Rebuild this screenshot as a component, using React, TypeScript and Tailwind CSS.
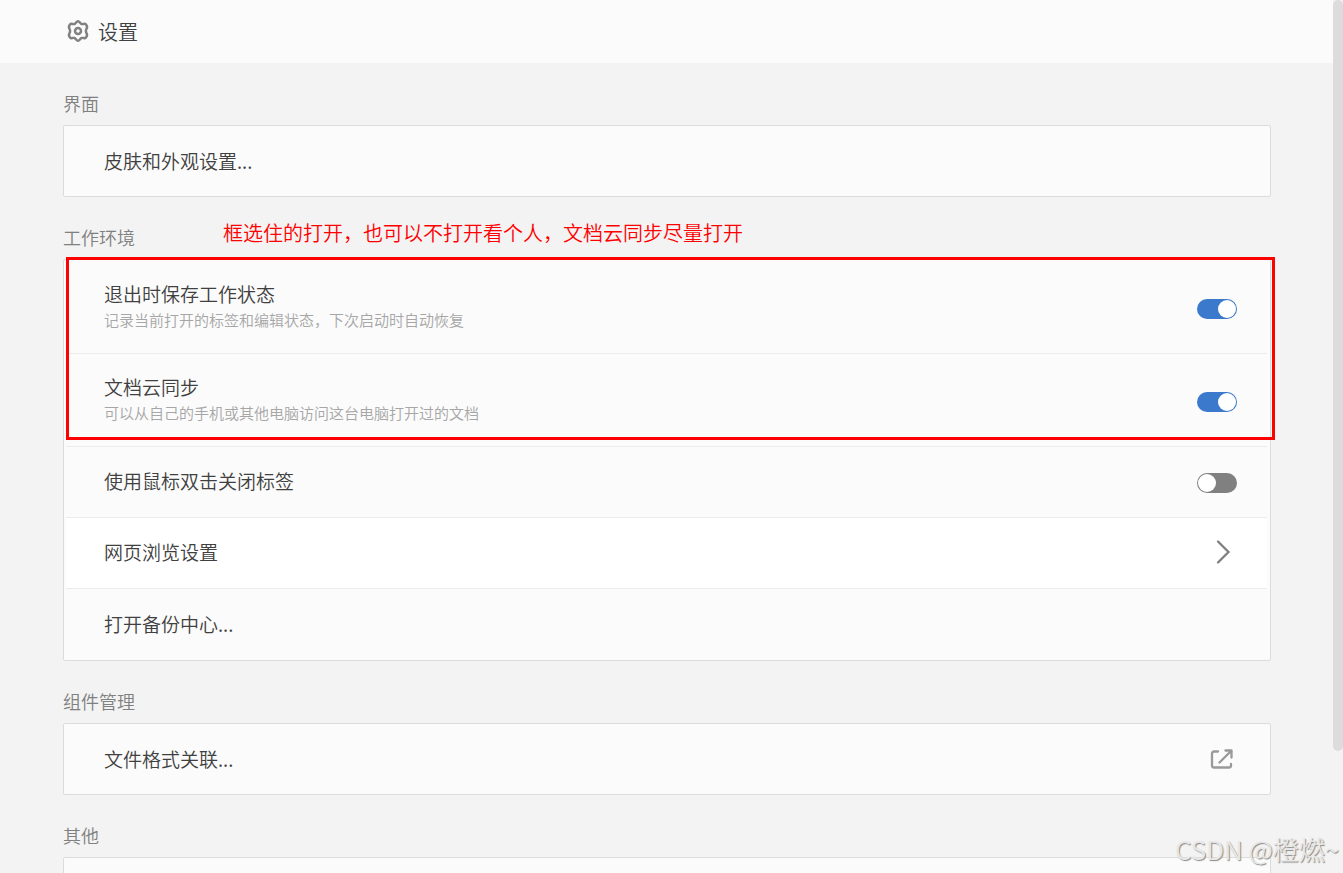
import { useState } from 'react';
import type { ReactNode } from 'react';

function Section({ title, children }: { title: string; children: ReactNode }) {
  return (
    <section>
      <h2 className="pt-[26px] pb-2 text-lg/7 text-[#808080]">{title}</h2>
      <div className="relative rounded-xs border border-[#dcdcdc] bg-[#fbfbfb] pt-px pr-[3px] pl-0.5">{children}</div>
    </section>
  );
}

function ToggleRow({ id, title, description, initial }: { id: string; title: string; description?: string; initial: boolean }) {
  const [on, setOn] = useState(initial);
  return (
    <div className={`flex items-center justify-between border-b border-[#ececec] pr-[30px] pl-[38px] ${description ? 'pt-5 pb-5' : 'h-[71px] pb-0.5'}`}>
      <div>
        <label htmlFor={id} className="block text-[19px]/[26px] text-[#404040]">{title}</label>
        {description && <p className="text-[15px]/[26px] text-[#a6a6a6]">{description}</p>}
      </div>
      <input
        id={id}
        type="checkbox"
        role="switch"
        checked={on}
        onChange={(e) => setOn(e.target.checked)}
        className="mt-1 h-5 w-10 shrink-0 appearance-none rounded-full bg-[#808080] p-px before:block before:size-[18px] before:rounded-full before:bg-white checked:bg-[#3a79cc] checked:before:ml-5"
      />
    </div>
  );
}

function ActionRow({ title, icon, className = '' }: { title: string; icon?: ReactNode; className?: string }) {
  return (
    <button type="button" className={`flex w-full items-center justify-between pb-0.5 pl-[38px] text-left text-[19px]/[26px] text-[#404040] ${className}`}>
      <span>{title}</span>
      {icon}
    </button>
  );
}

function GearIcon() {
  return (
    <svg viewBox="0 0 24 24" className="mb-0.5 size-6" fill="none" stroke="#808080" strokeWidth="2.5" strokeLinejoin="round" aria-hidden="true">
      <path d="M12 2.200c1.500 0 2 2.200 3.500 2.800s3.300-.9 4.300.300 1.700 2.700.9 4-.8 1.700-.8 2.700 0 1.400.8 2.700.1 2.800-.9 4-2.800-.3-4.300.3-2 2.800-3.500 2.800-2-2.200-3.500-2.800-3.300.9-4.300-.3-1.700-2.700-.9-4 .8-1.700.8-2.700 0-1.400-.8-2.700-.1-2.800.9-4 2.800.3 4.300-.3 2-2.800 3.500-2.800Z" />
      <circle cx="12" cy="12" r="3" />
    </svg>
  );
}

export default function App() {
  return (
    <div lang="zh-CN" className="relative flex h-screen overflow-hidden bg-[#f3f3f3] font-['Noto_Sans_CJK_SC',sans-serif] font-[350]">
      <div className="min-w-0 flex-1">
        <header className="flex h-[63px] items-center gap-2 bg-[#fbfbfb] pl-[66px]">
          <GearIcon />
          <h1 className="text-xl/7 text-[#404040]">设置</h1>
        </header>
        <main className="pr-[62px] pl-[63px]">
          <Section title="界面">
            <ActionRow title="皮肤和外观设置..." className="h-[69px]" />
          </Section>
          <div className="relative">
            <Section title="工作环境">
              <ToggleRow id="save-state" title="退出时保存工作状态" description="记录当前打开的标签和编辑状态，下次启动时自动恢复" initial />
              <ToggleRow id="cloud-sync" title="文档云同步" description="可以从自己的手机或其他电脑访问这台电脑打开过的文档" initial />
              <ToggleRow id="double-click" title="使用鼠标双击关闭标签" initial={false} />
              <ActionRow
                title="网页浏览设置"
                className="h-[71px] border-b border-[#ececec] bg-white pr-9"
                icon={
                  <svg viewBox="0 0 16 26" className="h-[26px] w-4" fill="none" stroke="#808080" strokeWidth="2.3" strokeLinecap="round" aria-hidden="true">
                    <path d="M3 2.500 13.500 13 3 23.500" />
                  </svg>
                }
              />
              <ActionRow title="打开备份中心..." className="h-[71px]" />
              <div className="pointer-events-none absolute -top-[3px] -right-[5px] left-0.5 h-[183px] border-3 border-[#ff0000]" />
            </Section>
            <p className="absolute top-[22px] left-40 text-xl/7 text-[#ff0000]">框选住的打开，也可以不打开看个人，文档云同步尽量打开</p>
          </div>
          <Section title="组件管理">
            <ActionRow
              title="文件格式关联..."
              className="h-[69px] pr-[33px]"
              icon={
                <svg viewBox="0 0 24 24" className="size-6" fill="none" stroke="#999999" strokeWidth="2.3" strokeLinecap="round" strokeLinejoin="round" aria-hidden="true">
                  <path d="M8 4.500H4a2 2 0 0 0-2 2v12a2 2 0 0 0 2 2h15a2 2 0 0 0 2-2V17M9.500 15.500 21 4" />
                  <path d="M15.500 3.500H21.500V10.500M19 3.500 21.500 6" />
                </svg>
              }
            />
          </Section>
          <Section title="其他">
            <div className="h-[69px]" />
          </Section>
        </main>
      </div>
      <div className="w-2.5 shrink-0 bg-[#f3f3f3]">
        <div className="h-[86%] rounded-full bg-[#dcdcdc]" />
      </div>
      <p className="absolute right-1 bottom-1.5 text-[26px]/9 text-[#e8e8e8] [text-shadow:1px_1px_1px_#888]">CSDN @橙燃~</p>
    </div>
  );
}
